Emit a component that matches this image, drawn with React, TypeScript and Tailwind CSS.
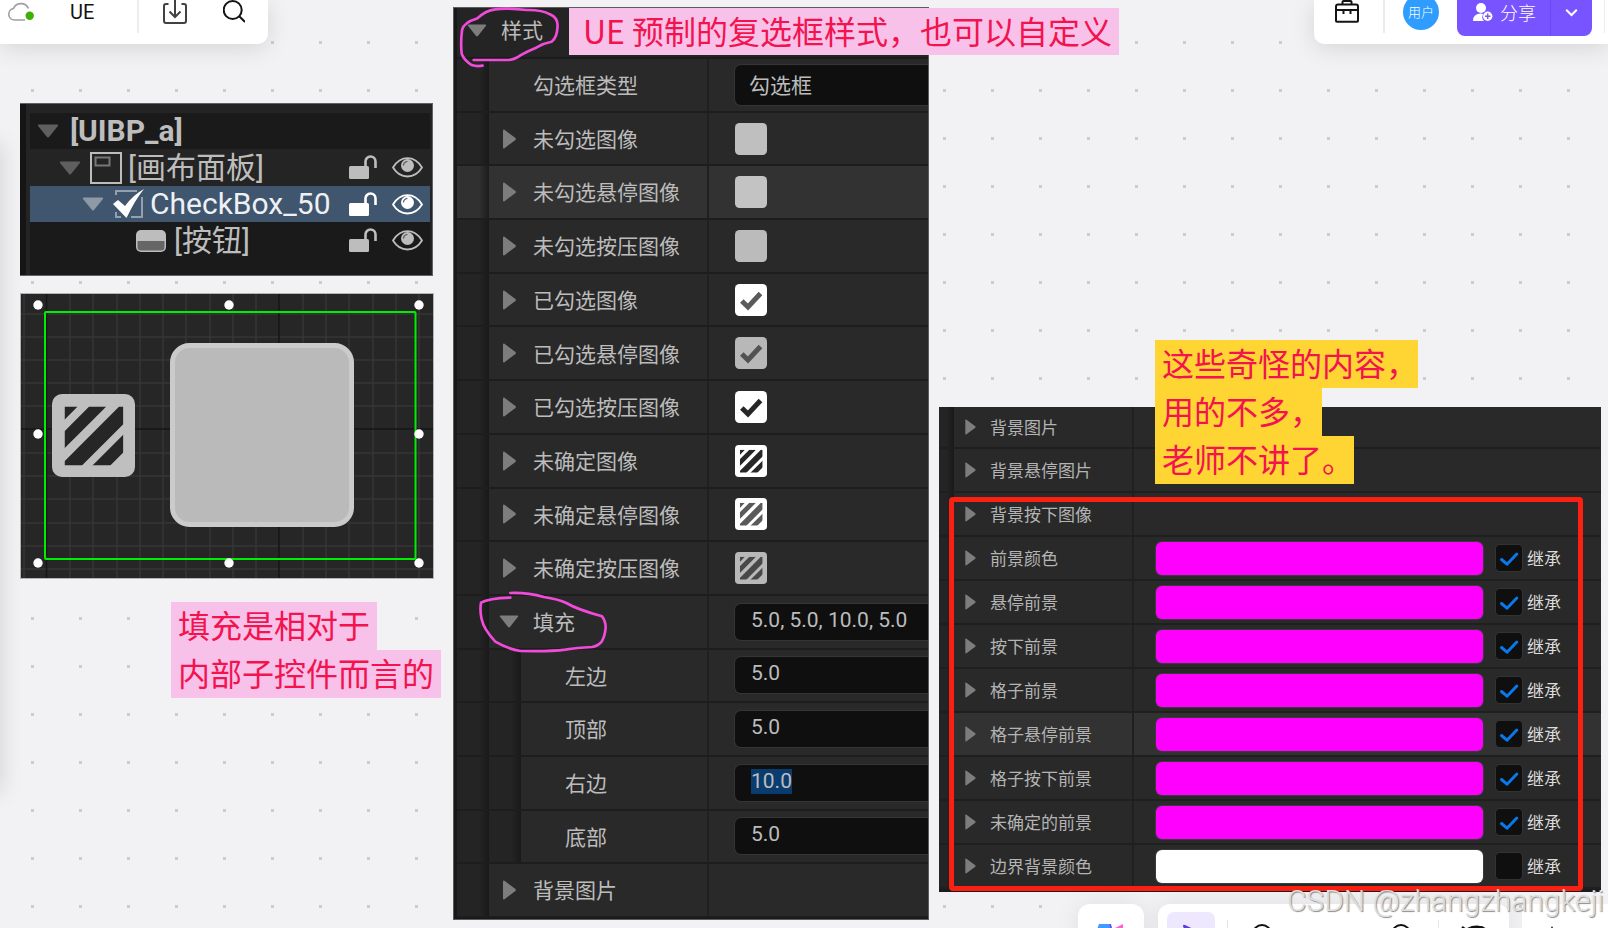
import type { ReactNode } from "react";

type Swatch = { fill: string; mark?: "check" | "stripes"; ink?: string };
type StyleRow = {
  label: string;
  kind: "select" | "swatch" | "group" | "field" | "empty";
  value?: string;
  swatch?: Swatch;
  hover?: boolean;
  selected?: boolean;
};

const STYLE_ROWS: StyleRow[] = [
  { label: "勾选框类型", kind: "select", value: "勾选框" },
  { label: "未勾选图像", kind: "swatch", swatch: { fill: "#bfbfbf" } },
  { label: "未勾选悬停图像", kind: "swatch", swatch: { fill: "#c3c3c3" }, hover: true },
  { label: "未勾选按压图像", kind: "swatch", swatch: { fill: "#bbbbbb" } },
  { label: "已勾选图像", kind: "swatch", swatch: { fill: "#ffffff", mark: "check", ink: "#5a5a5a" } },
  { label: "已勾选悬停图像", kind: "swatch", swatch: { fill: "#b8b8b8", mark: "check", ink: "#525252" } },
  { label: "已勾选按压图像", kind: "swatch", swatch: { fill: "#ffffff", mark: "check", ink: "#262626" } },
  { label: "未确定图像", kind: "swatch", swatch: { fill: "#ffffff", mark: "stripes", ink: "#262626" } },
  { label: "未确定悬停图像", kind: "swatch", swatch: { fill: "#ffffff", mark: "stripes", ink: "#5a5a5a" } },
  { label: "未确定按压图像", kind: "swatch", swatch: { fill: "#b8b8b8", mark: "stripes", ink: "#484848" } },
  { label: "填充", kind: "group", value: "5.0, 5.0, 10.0, 5.0" },
  { label: "左边", kind: "field", value: "5.0" },
  { label: "顶部", kind: "field", value: "5.0" },
  { label: "右边", kind: "field", value: "10.0", selected: true },
  { label: "底部", kind: "field", value: "5.0" },
  { label: "背景图片", kind: "empty" },
];

const COLOR_ROWS = [
  { label: "背景悬停图片" },
  { label: "背景按下图像" },
  { label: "前景颜色", color: "#ff00ff", inherit: true },
  { label: "悬停前景", color: "#ff00ff", inherit: true },
  { label: "按下前景", color: "#ff00ff", inherit: true },
  { label: "格子前景", color: "#ff00ff", inherit: true },
  { label: "格子悬停前景", color: "#ff00ff", inherit: true, hover: true },
  { label: "格子按下前景", color: "#ff00ff", inherit: true },
  { label: "未确定的前景", color: "#ff00ff", inherit: true },
  { label: "边界背景颜色", color: "#ffffff", inherit: false },
];

function Down({ className }: { className: string }) {
  return (
    <svg viewBox="0 0 22 14" className={className} aria-hidden="true">
      <path d="M1.5.5h19q1.2.3.4 1.4L12 13q-1 1-2 0L1.1 1.9Q.3.8 1.5.5z" fill="currentColor" />
    </svg>
  );
}

function Right({ className }: { className: string }) {
  return (
    <svg viewBox="0 0 13 20" className={className} aria-hidden="true">
      <path d="M0 1.500Q.2 0 1.500.8L12.500 9Q13.200 10 12.500 11L1.500 19.200Q.2 20 0 18.500z" fill="currentColor" />
    </svg>
  );
}

function Stripes({ fill, ink, className }: { fill: string; ink: string; className: string }) {
  return (
    <svg viewBox="0 0 252 252" className={className} aria-hidden="true">
      <rect width="252" height="252" rx="30" fill={fill} />
      <svg x="38" y="38" width="178" height="178" viewBox="0 0 178 178" fill={ink}>
        <path d="M0 0H40L0 40zM75 0H127L0 127V75zM166 0H232L0 232V166zM264 0H318L0 318V264z" />
      </svg>
    </svg>
  );
}

function SwatchButton({ label, swatch }: { label: string; swatch: Swatch }) {
  return (
    <button aria-label={label} className="size-8 rounded-[5px]">
      {swatch.mark === "stripes" ? (
        <Stripes fill={swatch.fill} ink={swatch.ink ?? "#262626"} className="size-8" />
      ) : (
        <svg viewBox="0 0 32 32" className="size-8" aria-hidden="true">
          <rect width="32" height="32" rx="4.5" fill={swatch.fill} />
          {swatch.mark === "check" && (
            <path d="M6.800 17l6.200 6L25.500 9.500" fill="none" stroke={swatch.ink} strokeWidth="5" />
          )}
        </svg>
      )}
    </button>
  );
}

function LockAndEye() {
  return (
    <span className="ml-auto mr-[7px] flex items-center gap-[15px]">
      <svg viewBox="0 0 28 25" className="h-[25px] w-7" fill="none" aria-hidden="true">
        <rect x="0" y="11" width="20" height="13" rx="1.500" fill="currentColor" />
        <path d="M16.500 11V6.500a5 5 0 0 1 10 0V13" stroke="currentColor" strokeWidth="2.600" />
      </svg>
      <svg viewBox="0 0 31 21" className="h-[21px] w-[31px]" fill="none" aria-hidden="true">
        <path d="M1 10.500C5 4 10 1.200 15.500 1.200S26 4 30 10.500C26 17 21 19.500 15.500 19.500S5 17 1 10.500z" stroke="currentColor" strokeWidth="1.800" />
        <circle cx="15.500" cy="8.500" r="6.500" fill="currentColor" />
        <path d="M11.500 8.500a4 4 0 0 1 4-4" stroke="#555" strokeWidth="1.200" />
      </svg>
    </span>
  );
}

function OutlinerPanel() {
  return (
    <section className="absolute left-5 top-[103px] w-[413px] border border-l-0 border-[#8b8b8b]/60 bg-[#242424] pl-[10px] pr-[2px] pt-[9px] font-['Roboto','Noto_Sans_CJK_SC',sans-serif] text-[30px] leading-9 text-[#bdbdbd] shadow-[inset_6px_0_0_#151515]">
      <div className="flex h-9 items-center gap-[11px] bg-[#1a1a1a] pl-[7px] font-bold">
        <Down className="h-[14px] w-[22px] text-[#5f5f5f]" />
        [UIBP_a]
      </div>
      <div className="flex h-[37px] items-center pl-[29px]">
        <Down className="h-[14px] w-[22px] text-[#5f5f5f]" />
        <svg viewBox="0 0 32 32" className="ml-[9px] mr-[6px] size-8" fill="none" aria-hidden="true">
          <rect x="1" y="1" width="30" height="30" stroke="#bdbdbd" strokeWidth="2" />
          <rect x="5.500" y="5.500" width="14" height="8" stroke="#777" strokeWidth="2" />
        </svg>
        [画布面板]
        <LockAndEye />
      </div>
      <div className="flex h-9 items-center bg-[#40556e] pl-[52px] text-white">
        <Down className="h-[14px] w-[22px] text-[#8f99a5]" />
        <svg viewBox="0 0 32 32" className="ml-[9px] mr-[5px] size-8" fill="none" aria-hidden="true">
          <path d="M3 7V3H24M29 9V29H18M8 29H3V24" stroke="#93a0b0" strokeWidth="2" />
          <path d="M0 16L5 12L12 18Q20 7 31 1Q22 12 13.500 30z" fill="#fff" />
        </svg>
        <span className="text-[#eef1f4]">CheckBox_50</span>
        <LockAndEye />
      </div>
      <div className="flex h-[53px] items-start bg-[#1a1a1a]">
        <div className="flex h-[37px] w-full items-center pl-[105px]">
          <svg viewBox="0 0 32 24" className="mr-[7px] h-6 w-8" aria-hidden="true">
            <rect x="1" y="1" width="30" height="22" rx="5" fill="#bdbdbd" />
            <path d="M2.500 12H29.500V18Q29.500 21.500 26 21.500H6Q2.500 21.500 2.500 18z" fill="#666" />
          </svg>
          [按钮]
          <LockAndEye />
        </div>
      </div>
    </section>
  );
}

const GRID_X = [4, 50, 73, 97, 120, 143, 166, 190, 213, 236, 283, 306, 329, 353, 376, 399];
const GRID_Y = [21, 44, 67, 90, 113, 160, 183, 206, 230, 253, 276];
const HANDLES = [[18, 12], [209, 12], [399, 12], [18, 141], [399, 141], [18, 270], [209, 270], [399, 270]];

function DesignerPreview() {
  return (
    <section className="absolute left-5 top-[293px] border border-[#8b8b8b]/60">
      <svg viewBox="1 1 412 284" className="h-[284px] w-[412px]" aria-label="CheckBox_50">
        <rect width="414" height="286" fill="#262626" />
        {GRID_X.map((x) => <path key={x} d={`M${x} 0V286`} stroke="#363636" strokeWidth="1.500" />)}
        {GRID_Y.map((y) => <path key={y} d={`M0 ${y}H414`} stroke="#363636" strokeWidth="1.500" />)}
        <path d="M26.500 0V286M259 0V286M0 136H414" stroke="#161616" strokeWidth="1.500" />
        <rect x="25" y="19" width="370.500" height="247" rx="1" fill="none" stroke="#00ee00" strokeWidth="2" />
        <rect x="152.500" y="52.500" width="179" height="179" rx="17" fill="#bababa" stroke="#cbcbcb" strokeWidth="5" />
        <svg x="32" y="101" width="83" height="83">
          <Stripes fill="#bfbfbf" ink="#262626" className="" />
        </svg>
        {HANDLES.map(([x, y]) => <circle key={`${x}-${y}`} cx={x} cy={y} r="4.700" fill="#fff" />)}
      </svg>
    </section>
  );
}

function Gutter() {
  return <span className="w-8 shrink-0 self-stretch bg-linear-to-r from-[#242424] from-70% to-[#191919]" />;
}

function ValueBox({ id, value, selected }: { id: string; value?: string; selected?: boolean }) {
  return (
    <div className="flex h-9 flex-1 items-start rounded-l-[6px] bg-[#0f0f0f] pl-4 pt-1 ring-1 ring-[#353535]">
      <input
        id={id}
        type="text"
        defaultValue={value}
        className={selected
          ? "field-sizing-content h-[25px] bg-[#0b3c70] font-['Roboto',sans-serif] text-[21px] leading-[25px] outline-none"
          : "field-sizing-content h-[25px] font-['Roboto',sans-serif] text-[21px] leading-[25px] outline-none"}
      />
    </div>
  );
}

function StylePanel() {
  return (
    <section className="absolute left-[453px] top-[7px] flex h-[913px] w-[476px] flex-col overflow-hidden border border-[#8b8b8b]/60 bg-[#181818] pb-px pl-[3px] text-[21px] text-[#bcbcbc]">
      <div className="flex h-[51px] shrink-0 items-center gap-[14px] border-b-2 border-[#1b1b1b] bg-[#242424] pb-[5px] pl-[10px]">
        <Down className="h-[13px] w-5 text-[#7d7d7d]" />
        样式
      </div>
      {STYLE_ROWS.map((row, i) => {
        const id = `style-${i}`;
        const nested = row.kind === "field";
        return (
          <div key={row.label} className={row.hover
            ? "flex flex-1 items-stretch border-b-2 border-[#1d1d1d] bg-[#323232]"
            : "flex flex-1 items-stretch border-b-2 border-[#1d1d1d] bg-[#292929]"}>
            {row.hover
              ? <span className="w-8 shrink-0 bg-linear-to-r from-[#303030] from-70% to-[#1c1c1c]" />
              : <Gutter />}
            <div className="flex w-[220px] shrink-0 items-center border-r-2 border-[#202020]">
              {nested && <Gutter />}
              <span className="flex w-11 shrink-0 items-center justify-start pl-[10px]">
                {row.kind === "group" && <Down className="h-[13px] w-5 text-[#7d7d7d]" />}
                {(row.kind === "swatch" || row.kind === "empty") && <Right className="ml-[4px] h-5 w-[13px] text-[#7d7d7d]" />}
              </span>
              <label htmlFor={id}>{row.label}</label>
            </div>
            <div className="flex flex-1 items-center pl-[26px]">
              {row.swatch && <SwatchButton label={row.label} swatch={row.swatch} />}
              {row.kind === "select" && (
                <select id={id} className="h-10 flex-1 appearance-none rounded-l-[6px] bg-[#0f0f0f] pl-[14px] ring-1 ring-[#353535]">
                  <option>{row.value}</option>
                </select>
              )}
              {(row.kind === "group" || row.kind === "field") && (
                <ValueBox id={id} value={row.value} selected={row.selected} />
              )}
            </div>
          </div>
        );
      })}
    </section>
  );
}

function ColorRow({ label, color, inherit, hover, first }: {
  label: string; color?: string; inherit?: boolean; hover?: boolean; first?: boolean;
}) {
  return (
    <div className={`flex items-stretch border-b-2 border-[#1f1f1f] ${first ? "h-[42px]" : "h-11"} ${hover ? "bg-[#323232]" : "bg-[#292929]"}`}>
      <span className="w-[15px] shrink-0 bg-linear-to-r from-[#242424] from-50% to-[#191919]" />
      <div className="flex w-[180px] shrink-0 items-center gap-[14px] border-r-2 border-[#202020] pl-[11px]">
        <Right className="h-4 w-[11px] text-[#7d7d7d]" />
        {label}
      </div>
      {color && (
        <div className="flex flex-1 items-center pl-[22px] pr-10">
          <button aria-label={label} className="h-[33px] flex-1 rounded-[6px] ring-1 ring-[#3a3a3a]" style={{ backgroundColor: color }} />
          <label className="ml-[13px] flex items-center gap-[5px] text-[#dcdcdc]">
            <span className="grid size-[26px]">
              <input type="checkbox" defaultChecked={inherit} className="peer col-start-1 row-start-1 size-[26px] appearance-none rounded-[4px] bg-[#0f0f0f] ring-1 ring-[#333]" />
              <svg viewBox="0 0 26 26" className="pointer-events-none invisible col-start-1 row-start-1 size-[26px] peer-checked:visible" fill="none" aria-hidden="true">
                <path d="M5.500 14.500L11 19.200L20.800 9" stroke="#0a78ea" strokeWidth="3" strokeLinecap="round" strokeLinejoin="round" />
              </svg>
            </span>
            继承
          </label>
        </div>
      )}
    </div>
  );
}

function ColorPanel() {
  return (
    <section className="absolute left-[939px] top-[407px] w-[662px] bg-[#1c1c1c] pb-[3px] text-[17px] text-[#b4b4b4]">
      <ColorRow label="背景图片" first />
      {COLOR_ROWS.map((row) => <ColorRow key={row.label} {...row} />)}
      <div className="pointer-events-none absolute bottom-px left-[10px] right-[18px] top-[90px] rounded-[4px] border-[5px] border-[#fb2011]" />
    </section>
  );
}

function Scribbles() {
  return (
    <>
      <svg viewBox="0 0 310 190" className="absolute left-[457px] top-[6px] h-[63px] w-[103px]" fill="none" aria-hidden="true">
        <path d="M50 163H150Q172 163 192 148Q215 135 240 125Q262 112 285 108Q302 95 303 60Q304 35 280 25Q255 11 210 12Q150 5 115 10Q85 14 60 38Q20 50 15 72Q10 110 14 145Q22 165 44 178Q58 183 77 180" stroke="#f04bd9" strokeWidth="8" strokeLinecap="round" strokeLinejoin="round" />
      </svg>
      <svg viewBox="0 0 390 186" className="absolute left-[477px] top-[591px] h-[62px] w-[130px]" fill="none" aria-hidden="true">
        <path d="M100 6Q150 4 200 18Q245 25 268 36Q300 55 375 76Q386 90 386 110Q384 135 374 152Q362 166 345 168Q300 170 265 176Q220 182 130 180Q95 175 55 152Q20 115 14 85Q8 60 12 35Q35 22 100 20" stroke="#f04bd9" strokeWidth="8" strokeLinecap="round" strokeLinejoin="round" />
      </svg>
    </>
  );
}

function Note({ className, children }: { className: string; children: ReactNode }) {
  return <p className={`w-fit whitespace-pre text-[32px] text-[#f2134f] ${className}`}>{children}</p>;
}

function Header() {
  return (
    <header className="relative z-10 flex h-11 items-start justify-between">
      <div className="flex h-11 items-start rounded-br-[10px] bg-white pr-[23px] shadow-[0_4px_24px_rgba(0,0,0,0.12)]">
        <svg viewBox="0 0 28 24" className="ml-[7px] h-6 w-7" fill="none" aria-hidden="true">
          <path d="M18 20H7.500A5.800 5.800 0 0 1 6.500 8.500A8.200 8.200 0 0 1 21.500 8.500" stroke="#a0a0a4" strokeWidth="1.700" />
          <circle cx="22.700" cy="15.700" r="4.200" fill="#3fae07" />
        </svg>
        <span className="ml-[35px] w-7 font-['Roboto',sans-serif] text-[20px] leading-6 text-[#141414]">UE</span>
        <span className="ml-[39px] h-[33px] w-[2px] bg-[#ececee]" />
        <button aria-label="导出" className="ml-6">
          <svg viewBox="0 0 24 24" className="size-6" fill="none" stroke="#414141" strokeWidth="2" aria-hidden="true">
            <path d="M5.500 4H3Q1 4 1 6V21Q1 23 3 23H21Q23 23 23 21V6Q23 4 21 4H18.500M12 0V16.500M6.500 11.500L12 17L17.500 11.500" />
          </svg>
        </button>
        <button aria-label="搜索" className="ml-9">
          <svg viewBox="0 0 22 23" className="h-[23px] w-[22px]" fill="none" stroke="#141414" strokeWidth="2" aria-hidden="true">
            <circle cx="9.700" cy="10" r="9" />
            <path d="M16 16L22 22" />
          </svg>
        </button>
      </div>
      <div className="flex h-11 w-[294px] items-start rounded-bl-[10px] bg-white shadow-[0_4px_24px_rgba(0,0,0,0.12)]">
        <button aria-label="工具箱" className="ml-[21px]">
          <svg viewBox="0 0 24 23" className="h-[23px] w-6" fill="none" stroke="#141414" strokeWidth="2" aria-hidden="true">
            <path d="M1 21V6.500Q1 4.500 3 4.500H21Q23 4.500 23 6.500V21Q23 21.700 22 21.700H2Q1 21.700 1 21zM7.500 4V2Q7.500 1 8.500 1H15.500Q16.500 1 16.500 2V4M1 10H23M8.500 10V14M15.500 10V14" />
          </svg>
        </button>
        <span className="ml-6 h-[33px] w-[2px] bg-[#ececee]" />
        <span className="-mt-[6px] ml-[18px] flex size-9 items-center justify-center rounded-full bg-[#2f9cff] text-[13px] font-light text-white">用户</span>
        <div className="ml-[18px] flex h-9 rounded-b-[8px] bg-[#7754ff] text-white">
          <button className="flex h-6 w-[93px] items-center gap-[7px] pl-4 text-[18px] font-light leading-6">
            <svg viewBox="0 0 20 19" className="h-[19px] w-5" aria-hidden="true">
              <circle cx="8" cy="5" r="5" fill="#fff" />
              <path d="M0 18Q0 10.500 8 10.500Q10 10.500 10 11.500Q8 15 11 18z" fill="#fff" />
              <circle cx="14.700" cy="13.300" r="4.700" fill="#fff" />
              <path d="M14.700 10.500V16M12 13.300H17.500" stroke="#7754ff" strokeWidth="1.500" />
            </svg>
            分享
          </button>
          <button aria-label="更多" className="h-9 w-[42px] border-l border-[#6a49ef] pb-[12px] pl-[14px]">
            <svg viewBox="0 0 13 9" className="h-[9px] w-[13px]" fill="none" aria-hidden="true">
              <path d="M1.200 1.800L6.500 7L11.800 1.800" stroke="#fff" strokeWidth="2" />
            </svg>
          </button>
        </div>
        <span className="ml-3 h-[33px] w-px bg-[#ececee]" />
      </div>
    </header>
  );
}

function Footer() {
  return (
    <footer className="relative z-10 flex h-6 items-start justify-end">
      <div className="flex h-16 w-[66px] justify-center rounded-[12px] bg-white pt-5 shadow-[0_0_24px_rgba(0,0,0,0.08)]">
        <svg viewBox="0 0 30 20" className="h-5 w-[30px]" aria-hidden="true">
          <path d="M3 0H13L16 8H0z" fill="#3f9bff" />
          <path d="M13 0H15L17 8H15z" fill="#6a4cf5" />
          <path d="M19 4L27 0V8z" fill="#ff5fd2" />
        </svg>
      </div>
      <div className="ml-[14px] flex h-16 w-[351px] items-start rounded-[12px] bg-white pl-[9px] pt-2 shadow-[0_0_24px_rgba(0,0,0,0.08)]">
        <button aria-label="选择" className="flex size-12 items-start rounded-[7px] bg-[#eee8ff] pl-4 pt-3">
          <svg viewBox="0 0 20 20" className="size-5" aria-hidden="true">
            <path d="M0 2Q0 0 2 1L19 9L10 12L6 20z" fill="#6239e0" />
          </svg>
        </button>
        <span className="ml-3 h-10 w-px self-center bg-[#e6e6e8]" />
        <svg viewBox="0 0 20 20" className="ml-6 mt-3 size-5" fill="none" aria-hidden="true">
          <circle cx="10" cy="10" r="9" stroke="#111" strokeWidth="2" />
        </svg>
        <svg viewBox="0 0 20 20" className="ml-[119px] mt-3 size-5" fill="none" aria-hidden="true">
          <circle cx="10" cy="10" r="9" stroke="#111" strokeWidth="2" />
        </svg>
        <span className="ml-[27px] h-10 w-px self-center bg-[#e6e6e8]" />
        <svg viewBox="0 0 28 12" className="ml-[22px] mt-[13px] h-3 w-7" fill="none" aria-hidden="true">
          <path d="M1 2L5 5Q12 1 18 2Q24 2 26 8" stroke="#111" strokeWidth="2.500" />
        </svg>
      </div>
      <div className="ml-[13px] h-16 w-[86px] rounded-l-[4px] bg-white pl-[27px] pt-[22px]">
        <svg viewBox="0 0 6 6" className="size-[6px]" aria-hidden="true"><path d="M3 0L6 6H0z" fill="#111" /></svg>
      </div>
    </footer>
  );
}

export default function App() {
  return (
    <main className="relative flex h-screen flex-col justify-between overflow-hidden bg-[#f2f2f4] font-['Noto_Sans_CJK_SC',sans-serif]">
      {/* dotted board background */}
      <svg className="absolute inset-0 size-full" aria-hidden="true">
        <defs>
          <pattern id="dots" x="31" y="41" width="48" height="48" patternUnits="userSpaceOnUse">
            <rect width="3" height="3" fill="#cdcdcf" />
          </pattern>
        </defs>
        <rect width="100%" height="100%" fill="url(#dots)" />
      </svg>
      {/* shadow of the collapsed side bar */}
      <div className="absolute -left-10 bottom-[140px] top-[140px] w-10 shadow-[0_4px_24px_rgba(0,0,0,0.14)]" />

      <Header />

      <div className="absolute inset-0">
        <OutlinerPanel />
        <DesignerPreview />
        <StylePanel />
        <ColorPanel />
        <Scribbles />
        <Note className="absolute left-[569px] top-2 bg-[#f8c1ea] pb-[3px] pl-[14px] pr-[7px] leading-[44px]">UE 预制的复选框样式，也可以自定义</Note>
        <div className="absolute left-[171px] top-[602px]">
          <Note className="bg-[#f8c1ea] px-[7px] pb-1 leading-[44px]">填充是相对于</Note>
          <Note className="bg-[#f8c1ea] px-[7px] pb-1 leading-[44px]">内部子控件而言的</Note>
        </div>
        <div className="absolute left-[1155px] top-[340px]">
          <Note className="bg-[#ffd534] pb-1 pl-[7px] leading-[44px]">这些奇怪的内容，</Note>
          <Note className="bg-[#ffd534] pb-1 pl-[7px] leading-[44px]">用的不多，</Note>
          <Note className="bg-[#ffd534] pb-1 pl-[7px] leading-[44px]">老师不讲了。</Note>
        </div>
      </div>

      <Footer />
      <p className="absolute bottom-[9px] right-[4px] z-20 font-['Roboto',sans-serif] text-[30px] font-light leading-9 text-[#dedede] [text-shadow:1px_1px_1px_#8a8a8a]">CSDN @zhangzhangkeji</p>
    </main>
  );
}
